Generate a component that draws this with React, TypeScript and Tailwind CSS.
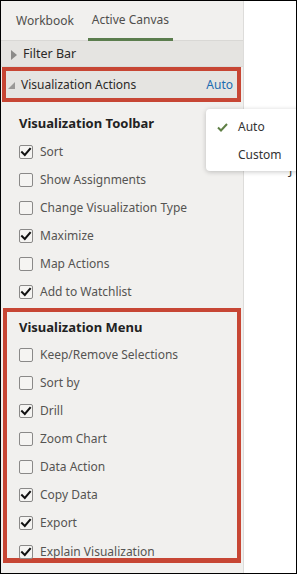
const toolbarItems = [
  { label: 'Sort', checked: true },
  { label: 'Show Assignments', checked: false },
  { label: 'Change Visualization Type', checked: false },
  { label: 'Maximize', checked: true },
  { label: 'Map Actions', checked: false },
  { label: 'Add to Watchlist', checked: true },
];

const menuItems = [
  { label: 'Keep/Remove Selections', checked: false },
  { label: 'Sort by', checked: false },
  { label: 'Drill', checked: true },
  { label: 'Zoom Chart', checked: false },
  { label: 'Data Action', checked: false },
  { label: 'Copy Data', checked: true },
  { label: 'Export', checked: true },
  { label: 'Explain Visualization', checked: true },
];

function Checkbox({ checked }: { checked: boolean }) {
  return (
    <span className="w-[14px] h-[14px] shrink-0 rounded-[2px] border border-[#8a8988] bg-[#f5f4f2] flex items-center justify-center">
      {checked && (
        <svg width="12" height="12" viewBox="0 0 12 12">
          <path d="M2 6.2 L4.8 9 L10 2.8" fill="none" stroke="#111" strokeWidth="2" strokeLinecap="square" />
        </svg>
      )}
    </span>
  );
}

function Row({ label, checked, last }: { label: string; checked: boolean; last?: boolean }) {
  return (
    <div className={`flex gap-[7px] ${last ? 'h-[21px] items-start pt-[8px]' : 'h-[28px] items-center'}`}>
      <Checkbox checked={checked} />
      <span className={`text-[12px] text-[#555452] ${last ? 'leading-[14px]' : ''}`}>{label}</span>
    </div>
  );
}

export default function App() {
  return (
    <div
      className="relative w-[297px] h-[574px] border border-black bg-white overflow-hidden flex"
      style={{ fontFamily: '"Noto Sans", "Open Sans", sans-serif' }}
    >
      <div className="w-[243px] h-full bg-[#f1f0ee] border-r border-[#dddcda] flex flex-col">
        {/* tabs */}
        <div className="h-[40px] flex items-stretch border-b border-[#d9d8d5] text-[12px] text-[#4f4e4c]">
          <div className="pl-[15px] pr-[14px] flex items-center pt-[1px]">Workbook</div>
          <div className="px-[4px] flex items-center pt-[1px] border-b-[3px] border-[#5b7d4e] mb-[-1px]">
            Active Canvas
          </div>
        </div>

        <div className="h-[26px] bg-[#e5e4e1] flex items-center pl-[10px] gap-[6px] border-b border-[#dcdbd8] pt-[2px]">
          <svg width="6" height="10" viewBox="0 0 6 10">
            <path d="M0 0 L6 5 L0 10 Z" fill="#8c8b89" />
          </svg>
          <span className="text-[12.5px] text-[#2b2a28]">Filter Bar</span>
        </div>

        <div className="ml-[1px] mr-[2px] border-4 border-[#c74634]">
          <div className="h-[27px] bg-[#e5e4e1] flex items-center pl-[2px] pr-[4px] pt-[1px]">
            <svg width="7" height="7" viewBox="0 0 7 7">
              <path d="M7 0 L7 7 L0 7 Z" fill="#9a9997" />
            </svg>
            <span className="ml-[6px] text-[12px] text-[#2b2a28]">Visualization Actions</span>
            <span className="ml-auto text-[12px] text-[#1b6bb0]">Auto</span>
          </div>
        </div>

        <div className="pl-[18px] pt-[8px]">
          <div className="h-[28px] flex items-center text-[13px] font-bold text-[#222]">Visualization Toolbar</div>
          {toolbarItems.map((it) => (
            <Row key={it.label} label={it.label} checked={it.checked} />
          ))}
        </div>

        <div className="mt-[2px] ml-[2px] mr-[2px] border-4 border-b-[5px] border-[#c74634] pl-[12px] pt-[2px]">
          <div className="h-[27px] flex items-center text-[13px] font-bold text-[#222]">Visualization Menu</div>
          {menuItems.map((it, i) => (
            <Row key={it.label} label={it.label} checked={it.checked} last={i === menuItems.length - 1} />
          ))}
        </div>
      </div>

      <span className="absolute left-[288px] top-[161px] text-[12px] text-[#333]">J</span>

      <div className="absolute left-[205px] top-[108px] w-[110px] h-[62px] bg-white rounded-[4px] shadow-[0_1px_5px_rgba(0,0,0,0.22)]">
        <div className="h-[33px] flex items-center pl-[11px] pt-[3px]">
          <svg width="11" height="9" viewBox="0 0 11 9">
            <path d="M1 4.5 L4 7.5 L10 1" fill="none" stroke="#5f7f45" strokeWidth="2" />
          </svg>
          <span className="ml-[10px] text-[12px] text-[#333]">Auto</span>
        </div>
        <div className="h-[26px] flex items-center pl-[32px] text-[12px] text-[#333]">Custom</div>
      </div>
    </div>
  );
}
